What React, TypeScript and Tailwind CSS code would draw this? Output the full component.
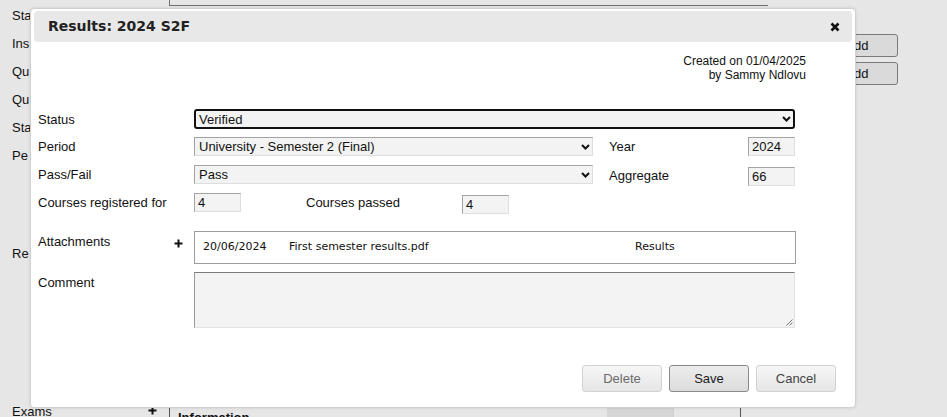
import React from 'react';

const sideLabels = ['Sta', 'Ins', 'Qu', 'Qu', 'Sta', 'Pe'];

function Chevron() {
  return (
    <svg width="9" height="6" viewBox="0 0 9 6" className="shrink-0">
      <path d="M1 1 L4.5 4.5 L8 1" fill="none" stroke="#111" strokeWidth="2" />
    </svg>
  );
}

function Plus() {
  return (
    <svg width="9" height="9" viewBox="0 0 9 9">
      <path d="M4.5 0.5 V8.5 M0.5 4.5 H8.5" stroke="#111" strokeWidth="2" />
    </svg>
  );
}

function Select({ value, width, focused }: { value: string; width: string; focused?: boolean }) {
  return (
    <div
      className={
        focused
          ? `flex h-[20px] ${width} items-center justify-between rounded-[3px] border-2 border-[#111] bg-[#f3f3f3] pl-[3px] pr-[2px]`
          : `flex h-[19px] ${width} items-center justify-between border border-t-[#a3a3a3] border-l-[#a3a3a3] border-r-[#dedede] border-b-[#dedede] bg-[#f3f3f3] pl-[4px] pr-[2px]`
      }
    >
      <span className="leading-none">{value}</span>
      <Chevron />
    </div>
  );
}

function Field({ value }: { value: string }) {
  return (
    <div className="flex h-[19px] w-[47px] items-center border border-t-[#a3a3a3] border-l-[#a3a3a3] border-r-[#dedede] border-b-[#dedede] bg-[#f3f3f3] pl-[3px] leading-none">
      {value}
    </div>
  );
}

function Btn({ label, strong, dim }: { label: string; strong?: boolean; dim?: boolean }) {
  return (
    <button
      className={
        strong
          ? 'h-[27px] w-[80px] rounded-[3px] border border-[#8a8a8a] bg-gradient-to-b from-[#ececec] to-[#dcdcdc] text-[13px] text-[#1a1a1a]'
          : `h-[27px] w-[80px] rounded-[3px] border border-[#d2d2d2] bg-gradient-to-b from-[#f6f6f6] to-[#e6e6e6] text-[13px] ${dim ? 'text-[#6b6b6b]' : 'text-[#444]'}`
      }
    >
      {label}
    </button>
  );
}

export default function App() {
  return (
    <div className="relative h-[417px] w-full overflow-hidden bg-[#e6e6e6] font-['Liberation_Sans',Arial,sans-serif] text-[13px] text-[#111]">
      {/* page behind the dialog */}
      <div className="flex h-full">
        <div className="flex w-[169px] shrink-0 flex-col pl-[12px] pt-[7px]">
          {sideLabels.map((l, i) => (
            <div key={i} className="h-[28px] leading-[18px]">{l}</div>
          ))}
          <div className="mt-[70px] h-[28px] leading-[18px]">Re</div>
          <div className="mt-auto flex h-[11px] items-start justify-between pr-[12px]">
            <span className="-mt-[1px] leading-none">Exams</span>
            <Plus />
          </div>
        </div>
        <div className="flex flex-1 flex-col">
          <div className="h-[6px] w-[599px] border-b border-l border-[#707070]" />
          <div className="ml-[639px] mt-[28px] flex w-[90px] flex-col gap-[5px]">
            <div className="flex h-[23px] items-center justify-center rounded-[3px] border border-[#7a7a7a] bg-[#dadada] pl-[8px]">Add</div>
            <div className="flex h-[23px] items-center justify-center rounded-[3px] border border-[#7a7a7a] bg-[#dadada] pl-[8px]">Add</div>
          </div>
          <div className="mt-auto flex h-[9px] border-l border-[#555]">
            <span className="w-[437px] pl-[8px] pt-[3px] font-bold leading-none">Information</span>
            <div className="h-full w-[66px] bg-[#d6d6d6]" />
            <div className="h-full w-[67px] border-l border-[#cfcfcf]" />
            <div className="h-full border-l border-[#555]" />
          </div>
        </div>
      </div>

      {/* dialog */}
      <div className="absolute left-[30px] top-[8px] flex h-[400px] w-[826px] flex-col rounded-[4px] border border-[#d0d0d0] bg-white p-[2px] shadow-[0_0_3px_rgba(0,0,0,0.12)]">
        <div className="mx-[1px] flex h-[31px] items-center justify-between rounded-[4px] bg-[#e8e8e8] pl-[14px] pr-[12px]">
          <span className="font-['DejaVu_Sans',Verdana,sans-serif] text-[14px] font-bold text-[#222]">Results: 2024 S2F</span>
          <svg width="10" height="10" viewBox="0 0 10 10">
            <path d="M1.5 1.5 L8.5 8.5 M8.5 1.5 L1.5 8.5" stroke="#111" strokeWidth="2.6" />
          </svg>
        </div>

        <div className="mt-[12px] pr-[47px] text-right text-[12px] leading-[14px]">
          <div>Created on 01/04/2025</div>
          <div>by Sammy Ndlovu</div>
        </div>

        <div className="mt-[27px] flex flex-col pl-[5px]">
          <div className="flex h-[20px] items-center">
            <span className="w-[156px] pt-[1px]">Status</span>
            <Select value="Verified" width="w-[601px]" focused />
          </div>

          <div className="mt-[8px] flex h-[19px] items-center">
            <span className="w-[156px]">Period</span>
            <Select value="University - Semester 2 (Final)" width="w-[399px]" />
            <span className="ml-[16px] w-[139px]">Year</span>
            <Field value="2024" />
          </div>

          <div className="mt-[9px] flex h-[19px] items-center">
            <span className="w-[156px]">Pass/Fail</span>
            <Select value="Pass" width="w-[399px]" />
            <span className="ml-[16px] mt-[2px] w-[139px]">Aggregate</span>
            <div className="mt-[3px]"><Field value="66" /></div>
          </div>

          <div className="mt-[9px] flex h-[19px] items-center">
            <span className="w-[156px]">Courses registered for</span>
            <Field value="4" />
            <span className="ml-[65px] w-[156px]">Courses passed</span>
            <div className="mt-[3px]"><Field value="4" /></div>
          </div>

          <div className="mt-[19px] flex">
            <div className="flex w-[156px] items-start justify-between pr-[11px] pt-[1px]">
              <span>Attachments</span>
              <span className="mt-[7px]"><Plus /></span>
            </div>
            <div className="flex h-[33px] w-[602px] items-center border border-[#9c9c9c] pl-[8px] font-['DejaVu_Sans',Verdana,sans-serif] text-[11px] text-[#111]">
              <span className="w-[86px]">20/06/2024</span>
              <span className="w-[346px]">First semester results.pdf</span>
              <span>Results</span>
            </div>
          </div>

          <div className="mt-[8px] flex">
            <span className="w-[156px] pt-[1px]">Comment</span>
            <div className="relative h-[56px] w-[601px] border border-t-[#7a7a7a] border-l-[#9a9a9a] border-r-[#e2e2e2] border-b-[#e2e2e2] bg-[#f3f3f3]">
              <svg width="7" height="7" viewBox="0 0 7 7" className="absolute bottom-[1px] right-[1px]">
                <path d="M6.5 0.5 L0.5 6.5 M6.5 3.5 L3.5 6.5" stroke="#777" strokeWidth="1" />
              </svg>
            </div>
          </div>
        </div>

        <div className="mt-[37px] flex justify-end gap-[7px] pr-[17px]">
          <Btn label="Delete" dim />
          <Btn label="Save" strong />
          <Btn label="Cancel" />
        </div>
      </div>
    </div>
  );
}
